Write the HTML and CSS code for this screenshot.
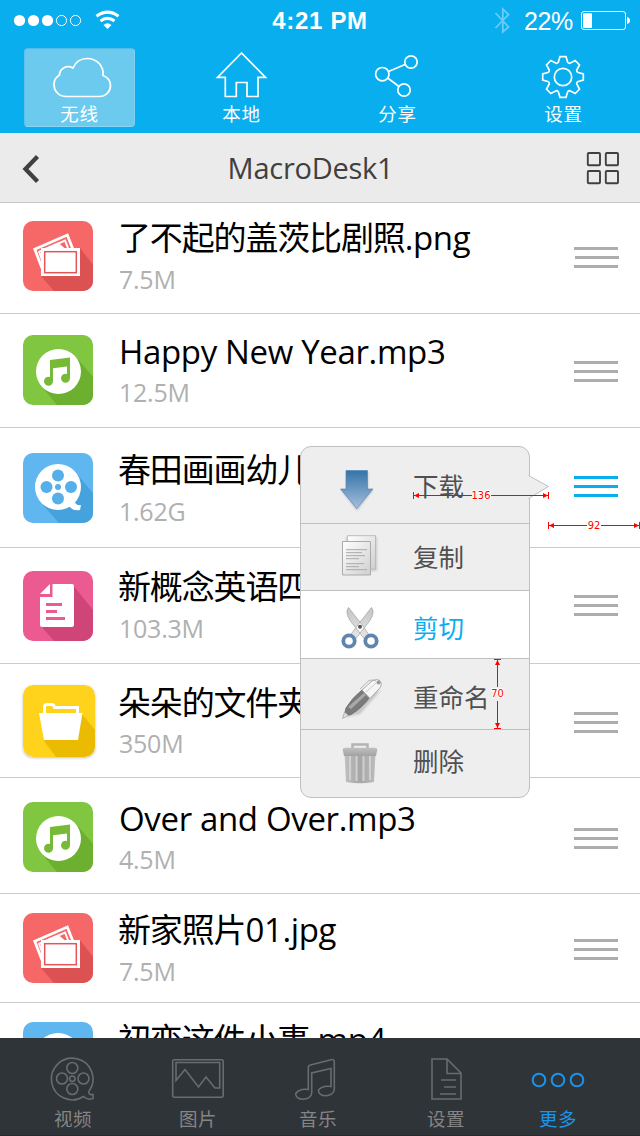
FILE: index.html
```html
<!DOCTYPE html>
<html lang="zh-CN">
<head>
<meta charset="utf-8">
<title>MacroDesk1</title>
<link rel="stylesheet" href="styles.css">
</head>
<body>
<svg class="defs" width="0" height="0">
  <defs>
    <linearGradient id="blue" x1="0" y1="0" x2="0" y2="1"><stop offset="0" stop-color="#3573a8"/><stop offset="1" stop-color="#a4c0dc"/></linearGradient>
    <linearGradient id="paper" x1="0" y1="0" x2="1" y2="1"><stop offset="0" stop-color="#fff"/><stop offset="1" stop-color="#cfcfcf"/></linearGradient>
    <linearGradient id="steel" x1="0" y1="0" x2="0" y2="1"><stop offset="0" stop-color="#c4c4c4"/><stop offset="1" stop-color="#e8e8e8"/></linearGradient>
    <linearGradient id="bin" x1="0" y1="0" x2="1" y2="0"><stop offset="0" stop-color="#c0c0c0"/><stop offset=".5" stop-color="#a6a6a6"/><stop offset="1" stop-color="#bcbcbc"/></linearGradient>
    <linearGradient id="lid" x1="0" y1="0" x2="0" y2="1"><stop offset="0" stop-color="#c0c0c0"/><stop offset="1" stop-color="#a2a2a2"/></linearGradient>
    <filter id="soft" x="-30%" y="-200%" width="160%" height="500%"><feGaussianBlur stdDeviation="1"/></filter>
    <symbol id="photo" viewBox="0 0 70 70">
      <rect width="70" height="70" rx="10" fill="#f66868"/>
      <path d="M57 27L70 44V60a10 10 0 0 1-10 10H31L18 55Z" fill="#dc5152"/>
      <path d="M19 47L11.800 28.200L44.300 14L49.800 28" fill="none" stroke="#fff" stroke-width="2.800"/>
      <path d="M19 39L16.200 30.800L42 19.500L45 27" fill="none" stroke="#fff" stroke-width="2"/>
      <path d="M21 27.500L35 21.500L42 27.500Z" fill="#fff"/>
      <rect x="18" y="27" width="39" height="28" fill="#fff"/>
      <rect x="21.700" y="30.700" width="31.600" height="21" fill="#fff" stroke="#e45557" stroke-width="1.500"/>
    </symbol>
    <symbol id="song" viewBox="0 0 70 70">
      <rect width="70" height="70" rx="10" fill="#80c641"/>
      <path d="M54 23L70 42V60a10 10 0 0 1-10 10H34L19 52Z" fill="#6daf2e"/>
      <circle cx="35.500" cy="36.500" r="22.500" fill="#fff"/>
      <path d="M27 25L47 22.500V43a4.500 4.500 0 1 1-3-4V31.500L30 33.200V46a4.500 4.500 0 1 1-3-4Z" fill="#76ba38"/>
    </symbol>
    <symbol id="film" viewBox="0 0 70 70">
      <rect width="70" height="70" rx="10" fill="#60b7f0"/>
      <path d="M53 20L70 40V60a10 10 0 0 1-10 10H36L20 52Z" fill="#46a2dd"/>
      <circle cx="35" cy="34" r="23" fill="#fff"/>
      <path d="M52 45C51 50 53 53 58 52L57 57C52 58 48 56 46 53Z" fill="#fff"/>
      <g fill="#55afe9"><circle cx="35" cy="22.500" r="6"/><circle cx="23.500" cy="34" r="6"/><circle cx="48" cy="34" r="6"/><circle cx="35" cy="45.500" r="6"/><circle cx="35" cy="34" r="3"/></g>
    </symbol>
    <symbol id="doc" viewBox="0 0 70 70">
      <rect width="70" height="70" rx="10" fill="#eb5a91"/>
      <path d="M50 14L70 39V60a10 10 0 0 1-10 10H31L18 55Z" fill="#d04578"/>
      <path d="M29.500 13H49a2 2 0 0 1 2 2V54a2 2 0 0 1-2 2H19a2 2 0 0 1-2-2V26H29.500Z" fill="#fff"/>
      <path d="M17 23L27 13V23Z" fill="#fff"/>
      <path d="M23 33.500H39M23 40.500H34M23 47.500H42" stroke="#eb5a91" stroke-width="3"/>
    </symbol>
    <symbol id="folder" viewBox="0 0 72 72">
      <rect width="72" height="72" rx="10" fill="#ffd21c"/>
      <path d="M59 29L72 45V62a10 10 0 0 1-10 10H33L21 56Z" fill="#eabb00"/>
      <path d="M21.500 29V22Q21.500 19.500 24 19.500H29Q31 19.500 31.500 22.500H54.500V29" fill="none" stroke="#fff" stroke-width="3"/>
      <path d="M16 28H59.500L55 55H21Z" fill="#fff"/>
    </symbol>
  </defs>
</svg>

<main class="screen">
  <header class="top">
    <div class="status">
      <svg class="signal" viewBox="0 0 130 40">
        <g fill="#fff"><circle cx="19.500" cy="20.500" r="5.600"/><circle cx="33.500" cy="20.500" r="5.600"/><circle cx="47.500" cy="20.500" r="5.600"/></g>
        <g fill="none" stroke="#fff"><circle cx="61.500" cy="20.500" r="5.100"/><circle cx="75.500" cy="20.500" r="5.100"/></g>
        <path d="M96.500 16.200Q107.500 8 118.500 16.200M100.500 21Q107.500 15.700 114.500 21" fill="none" stroke="#fff" stroke-width="3"/>
        <path d="M103.500 25Q107.500 21.300 111.500 25L107.500 29Z" fill="#fff"/>
      </svg>
      <time class="clock">4:21 PM</time>
      <div class="power">
        <svg class="bluetooth" viewBox="494 0 18 40"><path d="M495.500 13L508.500 27L502.800 32V9L508.500 14.500L495.500 28" fill="none" stroke="#6ccbf5" stroke-width="1.800"/></svg>
        <span class="percent">22%</span>
        <svg class="battery" viewBox="580 0 52 40"><rect x="581.500" y="11.500" width="44" height="18" rx="2.500" fill="none" stroke="#fff"/><rect x="583" y="13.300" width="9" height="14.700" rx="1" fill="#fff"/><path d="M627 17Q630 18 630 20.500T627 24Z" fill="#fff"/></svg>
      </div>
    </div>
    <nav class="nav">
      <a class="nav-item active"><svg viewBox="25 49 109 53"><path d="M66 96.500C59 96.500 54 91 54 85C54 80 56 77 59.500 75C59.500 69 66 64.500 73 68C75.500 62 81 58.500 87 58.500C97 58.500 104 66 103 75.500C108 77.500 110.500 81 110.500 85.500C110.500 91.500 106 96.500 99 96.500Z"/></svg><span>无线</span></a>
      <a class="nav-item"><svg viewBox="187 49 109 53"><path d="M241.500 53L217.500 77.300H225.300V96.500H236.300V82.500H247V96.500H258V77.300H265.500Z"/></svg><span>本地</span></a>
      <a class="nav-item"><svg viewBox="343 49 109 53"><circle cx="382.300" cy="74.200" r="6.700"/><circle cx="411" cy="62" r="6.200"/><circle cx="404" cy="90" r="6.200"/><path d="M388.500 71.500L405 64.500M387.700 78L399 86.500"/></svg><span>分享</span></a>
      <a class="nav-item"><svg viewBox="509 49 109 53"><g transform="translate(563 77)"><circle r="8.700"/><path d="M-4.800-14.500L-3-20.300H3L4.800-14.500Q5.800-13.500 6.900-13.700L12.200-16.500L16.500-12.200L13.700-6.900Q13.500-5.800 14.500-4.800L20.300-3V3L14.500 4.800Q13.500 5.800 13.700 6.900L16.500 12.200L12.200 16.500L6.900 13.700Q5.800 13.500 4.800 14.500L3 20.300H-3L-4.800 14.500Q-5.800 13.500-6.900 13.700L-12.200 16.500L-16.500 12.200L-13.700 6.900Q-13.500 5.800-14.500 4.800L-20.300 3V-3L-14.500-4.800Q-13.500-5.800-13.700-6.900L-16.500-12.200L-12.200-16.500L-6.900-13.700Q-5.800-13.500-4.800-14.500Z"/></g></svg><span>设置</span></a>
    </nav>
  </header>

  <div class="titlebar">
    <svg class="back" viewBox="20.500 150 24 38"><path d="M38 156.500L26 169L38 181.500" fill="none" stroke="#404040" stroke-width="4.300"/></svg>
    <h1>MacroDesk1</h1>
    <svg class="grid" viewBox="585.200 150 36 38"><g fill="none" stroke="#404040" stroke-width="1.900"><rect x="588" y="153" width="12.200" height="12.200" rx="1"/><rect x="606" y="153" width="12.200" height="12.200" rx="1"/><rect x="588" y="171" width="12.200" height="12.200" rx="1"/><rect x="606" y="171" width="12.200" height="12.200" rx="1"/></g></svg>
  </div>

  <ul class="files">
    <li><svg class="thumb"><use href="#photo"/></svg><div class="info"><h2><b>了不起的盖茨比剧照</b>.png</h2><p>7.5M</p></div><i class="grip"><s></s><s></s><s></s></i></li>
    <li><svg class="thumb"><use href="#song"/></svg><div class="info"><h2>Happy New Year.mp3</h2><p>12.5M</p></div><i class="grip"><s></s><s></s><s></s></i></li>
    <li><svg class="thumb"><use href="#film"/></svg><div class="info"><h2><b>春田画画幼儿园</b></h2><p>1.62G</p></div><i class="grip on"><s></s><s></s><s></s></i></li>
    <li><svg class="thumb"><use href="#doc"/></svg><div class="info"><h2><b>新概念英语四</b></h2><p>103.3M</p></div><i class="grip"><s></s><s></s><s></s></i></li>
    <li><svg class="thumb big"><use href="#folder"/></svg><div class="info"><h2><b>朵朵的文件夹</b></h2><p>350M</p></div><i class="grip"><s></s><s></s><s></s></i></li>
    <li><svg class="thumb"><use href="#song"/></svg><div class="info"><h2>Over and Over.mp3</h2><p>4.5M</p></div><i class="grip"><s></s><s></s><s></s></i></li>
    <li><svg class="thumb"><use href="#photo"/></svg><div class="info"><h2><b>新家照片</b>01.jpg</h2><p>7.5M</p></div><i class="grip"><s></s><s></s><s></s></i></li>
    <li><svg class="thumb"><use href="#film"/></svg><div class="info"><h2><b>初恋这件小事</b>.mp4</h2></div></li>
  </ul>

  <footer class="tabs">
    <a class="tab"><svg viewBox="33 1050 80 56"><circle cx="72.300" cy="1068" r="5.500"/><circle cx="62" cy="1078.500" r="5.500"/><circle cx="83.500" cy="1078.500" r="5.500"/><circle cx="72.300" cy="1089" r="5.500"/><circle cx="72.300" cy="1078.700" r="2.700"/><path d="M83.500 1096.500A20.800 20.800 0 1 1 89 1091.300C88 1094 90 1095 93 1094.500V1098.500C89 1100 86 1099 83.500 1096.500Z"/></svg><span>视频</span></a>
    <a class="tab"><svg viewBox="158 1050 80 56"><rect x="172.700" y="1059.700" width="50.500" height="37.500" rx="1.500"/><path d="M176 1062.500H219.700V1088H215L206 1077L198.500 1087L185 1069.500L176 1080.500Z"/></svg><span>图片</span></a>
    <a class="tab"><svg viewBox="278 1050 80 56"><path d="M308.300 1067.500Q308.300 1065.500 310.500 1065L331 1059.700Q334.300 1059 334.300 1062V1089.500C334 1093 330.500 1095.800 326 1095.800S318.500 1093.500 318.500 1091S323 1085.500 331 1086.500V1068.500L311.700 1073V1093C311.500 1096.500 308 1099.300 303 1099.300S295.700 1096.500 295.700 1094.300S300 1088.500 308.300 1089.500Z"/></svg><span>音乐</span></a>
    <a class="tab"><svg viewBox="406 1050 80 56"><path d="M432 1059H447L461 1073V1099H432ZM447 1059V1073.500H461M441 1080H456M444 1087H456M440 1094H456"/></svg><span>设置</span></a>
    <a class="tab on"><svg viewBox="518 1050 80 56"><circle cx="539" cy="1080" r="6.300"/><circle cx="558" cy="1080" r="6.300"/><circle cx="577" cy="1080" r="6.300"/></svg><span>更多</span></a>
  </footer>

  <div class="popover">
    <svg class="arrow" viewBox="528 473 22 28"><path d="M528.500 475.500L548.500 486.500L528.500 498.500" fill="#eee" stroke="#bfbfbf"/><path d="M528.500 476V498" stroke="#eee" stroke-width="2"/></svg>
    <div class="option"><svg viewBox="331 462 60 56"><path d="M346.500 472H368V490H373L357 510.500L341 490H346.500Z" fill="#777" opacity=".4" filter="url(#soft)"/><path d="M346 470.500H367.500V489H373L356.700 508.500L340.500 489H346Z" fill="url(#blue)" stroke="#4e84b4" stroke-opacity=".6"/></svg><span>下载</span></div>
    <div class="option"><svg viewBox="331 529 60 56"><rect x="346" y="537" width="31" height="34" fill="#999" opacity=".4" filter="url(#soft)"/><path d="M347.500 535.700H375.500V569H347.500Z" fill="url(#paper)" stroke="#bcbcbc"/><path d="M342.500 541.500H370.500V575H342.500Z" fill="url(#paper)" stroke="#aaa"/><path d="M346 549.700H367M346 552.700H362M346 555.700H365M346 558.700H359M346 563.700H364M346 566.700H359M346 569.700H367" stroke="#a8a8a8"/></svg><span>复制</span></div>
    <div class="option picked"><svg viewBox="331 602 60 56"><path d="M340 648.500H381" stroke="#777" stroke-width="3" opacity=".6" filter="url(#soft)"/><path d="M348.500 607.500L363 626L369 635L364.500 639L356 628Q343 614 348.500 607.500ZM371.500 607.500L357 626L350.500 635L355.500 639L364 628Q377 614 371.500 607.500Z" fill="url(#steel)" stroke="#aaa" stroke-width=".8"/><circle cx="360" cy="626.700" r="2" fill="#555"/><g fill="#fff" stroke="#6086ad" stroke-width="3.800"><circle cx="349" cy="641" r="5.700"/><circle cx="371" cy="641" r="5.700"/></g></svg><span>剪切</span></div>
    <div class="option"><svg viewBox="331 671 60 56"><path d="M346 717L372 693L381 690L360 714Z" fill="#888" opacity=".4" filter="url(#soft)"/><path d="M344 716.500L346 708Q352 698 362 690L370 697Q362 708 351 714.500Z" fill="#7b7b7b" stroke="#686868" stroke-width=".8"/><path d="M348 707L364 693L366 695L351 709Z" fill="#a9a9a9"/><path d="M342.500 718.500L344.500 712L348.500 715.500Z" fill="#ddd" stroke="#999" stroke-width=".6"/><path d="M362 690L372 681Q378 678 380.500 681.500T378 690L370 698.500Z" fill="#f6f6f6" stroke="#aaa"/><path d="M376 683L366 692" stroke="#c9c9c9"/><path d="M360 689L369 680.500Q373 679 376 681" fill="none" stroke="#b5b5b5"/><circle cx="378.500" cy="682.500" r="2" fill="#999"/></svg><span>重命名</span></div>
    <div class="option"><svg viewBox="331 736 60 56"><path d="M341 783H380" stroke="#888" stroke-width="2.500" opacity=".5" filter="url(#soft)"/><path d="M352.500 748V744.500H367.500V748" fill="none" stroke="#b4b4b4" stroke-width="2.500"/><path d="M344.500 753H375.500L374 782Q360 784.500 346 782Z" fill="url(#bin)"/><path d="M350 756V780M356.500 756V781M363.500 756V781M370 756V780" stroke="#d0d0d0" stroke-width="2"/><path d="M342.700 750Q342.700 747.700 345 747.700H375Q377.300 747.700 377.300 750L376 756H344Z" fill="url(#lid)"/></svg><span>删除</span></div>
  </div>

  <svg class="measures" viewBox="410 485 230 250">
    <g fill="none" stroke="#f00">
      <path d="M413.500 492V499M548.500 492V499M414 495.500H472M491 495.500H548"/>
      <path d="M548.500 522V529M639.500 522V529M549 525.500H587M601 525.500H639"/>
      <path d="M494 659.500H501M494 728.500H501M497.500 660V687M497.500 701V728"/>
    </g>
    <path fill="#f00" d="M414 495.500L419 493V498ZM548 495.500L543 493V498ZM549 525.500L554 523V528ZM639 525.500L634 523V528ZM497.500 660L495 665H500ZM497.500 728L495 723H500Z"/>
    <g class="measure-text"><text x="481" y="499">136</text><text x="594" y="529">92</text><text x="497.500" y="697">70</text></g>
  </svg>
</main>
</body>
</html>
```
FILE: styles.css
```css
* { box-sizing: border-box; margin: 0; padding: 0; }
body { width: 640px; height: 1136px; overflow: hidden; font-family: "Open Sans", "Noto Sans CJK SC", sans-serif; background: #fff; }
.defs { position: absolute; }
.screen { position: relative; width: 640px; height: 1136px; display: flex; flex-direction: column; overflow: hidden; }

.top { height: 133px; flex: none; background: #09aeee; color: #fff; }
.status { height: 48px; display: grid; grid-template-columns: 1fr auto 1fr; font-family: "Liberation Sans", sans-serif; line-height: 42px; }
.signal { width: 130px; height: 40px; }
.clock { font-size: 24px; font-weight: bold; letter-spacing: .7px; }
.power { display: flex; justify-content: flex-end; padding-right: 8px; }
.bluetooth { width: 18px; height: 40px; }
.percent { font-size: 25px; width: 50px; margin: 0 6px 0 12px; letter-spacing: -.4px; }
.battery { width: 52px; height: 40px; }

.nav { display: grid; grid-template-columns: 162px 156px 166px 111px; padding-left: 24px; }
.nav-item { width: 111px; height: 79px; border: 1px solid transparent; border-radius: 4px; display: flex; flex-direction: column; align-items: center; font-family: "Noto Sans CJK SC", sans-serif; font-size: 18.500px; letter-spacing: .8px; line-height: 22px; }
.nav-item.active { background: #6bcaee; border-color: #52bbe6 #7fd2f2 #8bd7f3 #5fc1ea; }
.nav-item svg { width: 109px; height: 53px; fill: none; stroke: #fff; stroke-width: 1.700; }

.titlebar { height: 70px; flex: none; background: #ebebeb; border-bottom: 1px solid #c8c8c8; display: flex; justify-content: space-between; align-items: flex-start; padding: 17px 19px 0 20px; }
.back { width: 24px; height: 38px; }
.titlebar h1 { font-size: 29px; font-weight: 400; color: #404040; letter-spacing: -.25px; line-height: 36px; margin-left: -8px; }
.grid { width: 36px; height: 38px; }

.files { list-style: none; flex: 1; overflow: hidden; }
.files li { --icon: 18px; --text: 15px; --grip: 44px; --gap: 6px; height: 111px; display: flex; align-items: flex-start; padding: 0 22px 0 23px; border-bottom: 1px solid #cbcbcb; }
.files li:nth-child(2) { height: 114px; --icon: 21px; --text: 18px; --grip: 47px; --gap: 5px; }
.files li:nth-child(3) { height: 120px; --icon: 25px; --text: 22px; --grip: 48px; }
.files li:nth-child(4) { height: 116px; --icon: 23px; --text: 19px; --grip: 47px; }
.files li:nth-child(5) { height: 114px; --icon: 21px; --text: 19px; --grip: 48px; --gap: 5px; }
.files li:nth-child(6) { height: 116px; --icon: 24px; --text: 21px; --grip: 50px; --gap: 5px; }
.files li:nth-child(7) { height: 109px; --icon: 19px; --text: 16px; --grip: 45px; }
.files li:nth-child(8) { --icon: 19px; --text: 17px; border: 0; }
.thumb { width: 70px; height: 70px; flex: none; margin: var(--icon) 26px 0 0; }
.thumb.big { width: 72px; height: 72px; margin-right: 24px; border-radius: 10px; box-shadow: 0 1px 3px rgba(0, 0, 0, .25); }
.info { flex: 1; margin-top: var(--text); white-space: nowrap; }
.info h2 { font-size: 33px; font-weight: 400; line-height: 40px; letter-spacing: -.35px; color: #000; }
.info b { font: 400 33px/1 "Noto Sans CJK SC", sans-serif; letter-spacing: -1.150px; margin-left: -1px; }
.info p { font-size: 25px; line-height: 30px; letter-spacing: -.25px; color: #b0b0b0; margin-top: var(--gap); }
.grip { width: 44px; margin-top: var(--grip); display: grid; gap: 6px; }
.grip s { height: 3px; background: #adadad; }
.files li:first-child .grip s:nth-child(2) { transform: translateX(1px); }
.grip.on s { background: #09aeee; }

.tabs { height: 98px; flex: none; background: #2f3439; border-bottom: 1px solid #25292d; display: grid; grid-template-columns: 125px 120px 128px 112px 80px; padding: 12px 0 0 33px; }
.tab { width: 80px; display: flex; flex-direction: column; align-items: center; font-family: "Noto Sans CJK SC", sans-serif; font-size: 18.500px; letter-spacing: .6px; line-height: 24px; color: #858585; }
.tab svg { width: 80px; height: 56px; fill: none; stroke: #686c6e; stroke-width: 1.600; }
.tab.on { color: #1a94ea; }
.tab.on svg { stroke: #1a94ea; stroke-width: 2; }

.popover { position: absolute; left: 300px; top: 446px; width: 230px; height: 352px; background: #eee; border: 1px solid #bfbfbf; border-radius: 11px; }
.arrow { position: absolute; left: 227px; top: 26px; width: 22px; height: 28px; }
.option { height: 77px; padding: 15px 0 0 30px; display: flex; gap: 22px; border-bottom: 1px solid #bfbfbf; color: #505050; font: 25.500px/50px "Noto Sans CJK SC", sans-serif; }
.option svg { width: 60px; height: 56px; flex: none; overflow: visible; }
.option:nth-of-type(1) { line-height: 46px; }
.option:nth-of-type(2) { height: 67px; padding-top: 5px; line-height: 53px; }
.option:nth-of-type(3) { height: 68px; padding-top: 11px; }
.option:nth-of-type(4) { height: 71px; padding-top: 12px; }
.option:nth-of-type(5) { height: 67px; padding-top: 6px; line-height: 47px; border: 0; }
.option.picked { background: #fff; color: #09aeee; }

.measures { position: absolute; left: 410px; top: 485px; width: 230px; height: 250px; }
.measure-text { font: 11px "DejaVu Sans Condensed", "DejaVu Sans", sans-serif; fill: #f00; stroke: #fff; stroke-width: 2px; paint-order: stroke; text-anchor: middle; }
```
